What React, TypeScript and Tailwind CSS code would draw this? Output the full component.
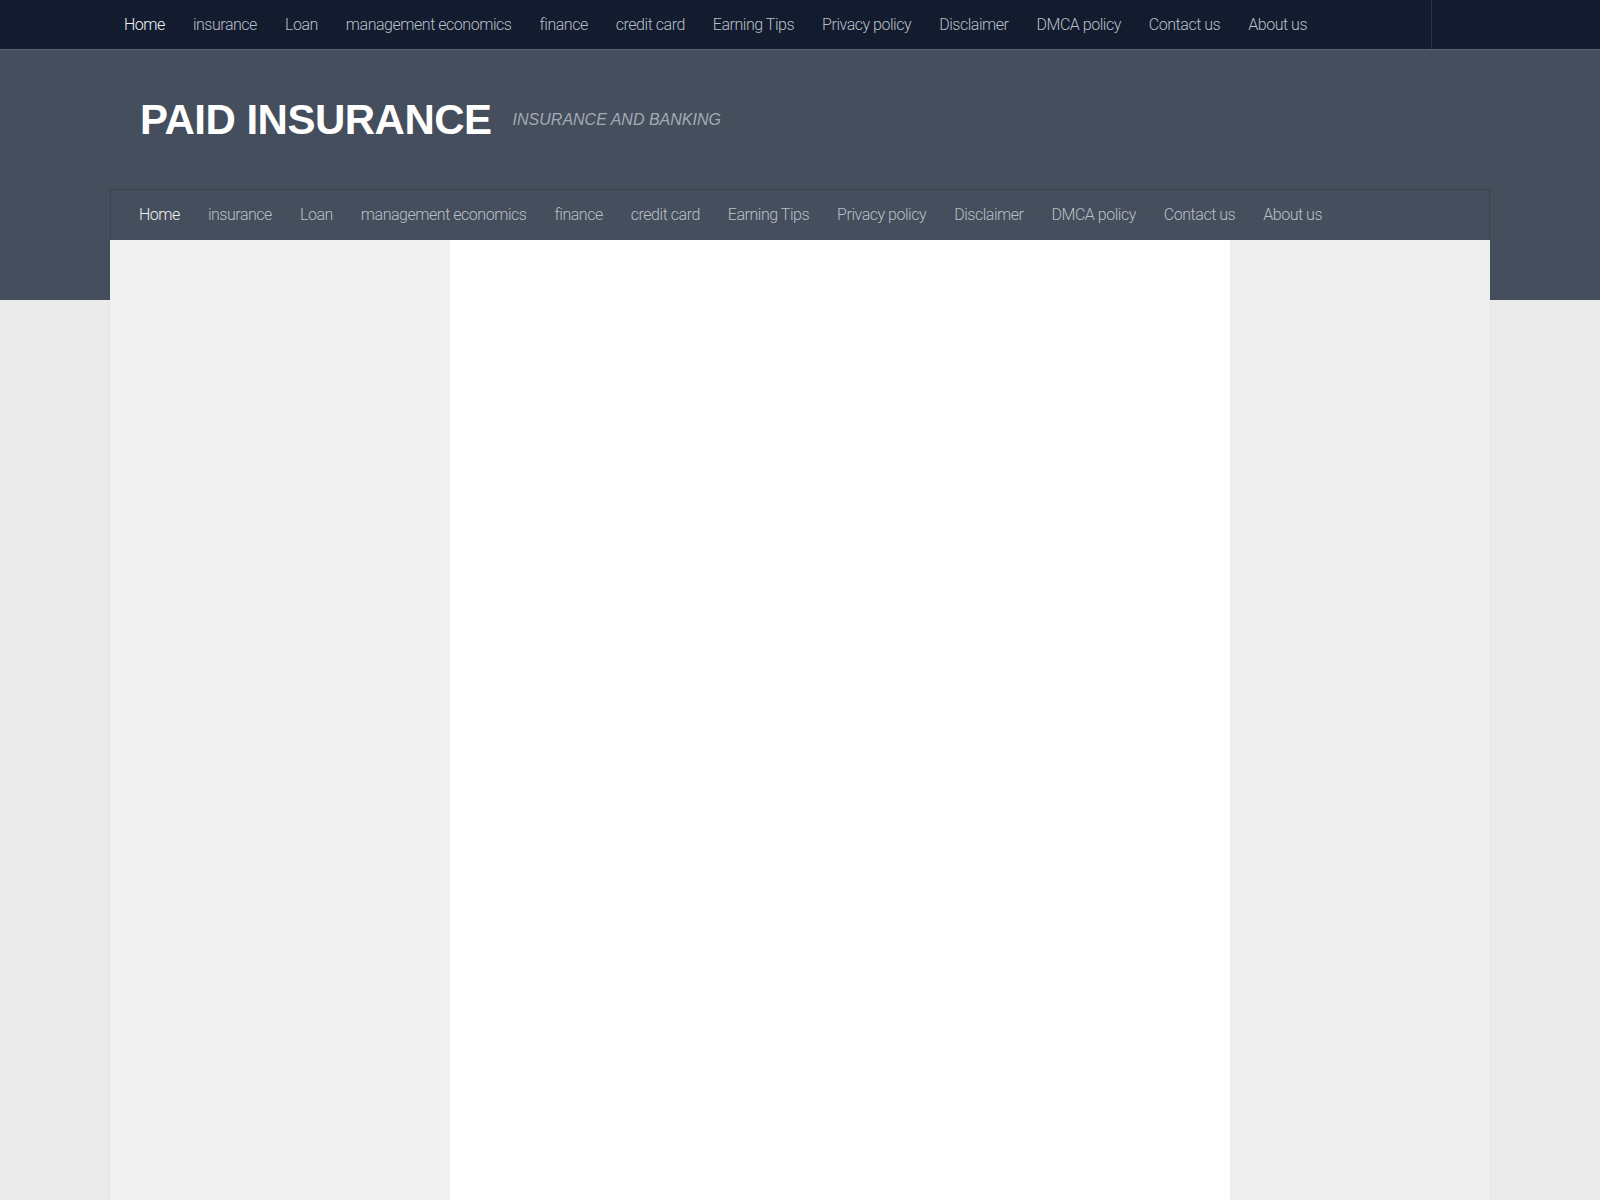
import React from "react";

const items = [
  "Home",
  "insurance",
  "Loan",
  "management economics",
  "finance",
  "credit card",
  "Earning Tips",
  "Privacy policy",
  "Disclaimer",
  "DMCA policy",
  "Contact us",
  "About us",
];

function NavList() {
  return (
    <ul className="flex items-center gap-[28px]">
      {items.map((it, i) => (
        <li
          key={it}
          className={
            "whitespace-nowrap text-[16px] font-light tracking-[-0.47px] " +
            (i === 0 ? "text-[#f2f3f5]" : "text-[#b9bfc8]")
          }
        >
          {it}
        </li>
      ))}
    </ul>
  );
}

export default function App() {
  return (
    <div
      className="min-h-[1200px] bg-[#eaeaea]"
      style={{ fontFamily: "Roboto, 'Noto Sans', sans-serif" }}
    >
      {/* top bar */}
      <div className="h-[50px] bg-[#131c2e] border-b border-[#5a6270]">
        <div className="mx-auto flex h-[49px] w-[1380px] items-center">
          <div className="flex h-full flex-1 items-center pl-[14px]">
            <NavList />
          </div>
          <div className="h-full w-[59px] border-l border-[#2a3446]" />
        </div>
      </div>

      {/* header */}
      <div className="h-[250px] bg-[#454e5c]">
        <div className="mx-auto w-[1380px]">
          <div className="flex h-[139px] items-center pl-[30px]">
            <h1
              className="text-[42px] font-bold leading-none tracking-[-0.5px] text-white"
              style={{ fontFamily: "'Liberation Sans', Arial, sans-serif" }}
            >
              PAID INSURANCE
            </h1>
            <p
              className="ml-[21px] text-[16px] italic text-[#a3aab5]"
              style={{ fontFamily: "'Liberation Sans', Arial, sans-serif" }}
            >
              INSURANCE AND BANKING
            </p>
          </div>
          <div className="flex h-[51px] items-center border border-b-0 border-[#3a4250] pl-[28px]">
            <NavList />
          </div>
        </div>
      </div>

      {/* content */}
      <div className="relative mx-auto -mt-[60px] flex h-[960px] w-[1380px] shadow-[0_0_2px_rgba(0,0,0,0.06)]">
        <div className="w-[340px] bg-[#f0f0f0]" />
        <div className="w-[780px] bg-white" />
        <div className="flex-1 bg-[#eeeeee]" />
      </div>
    </div>
  );
}
